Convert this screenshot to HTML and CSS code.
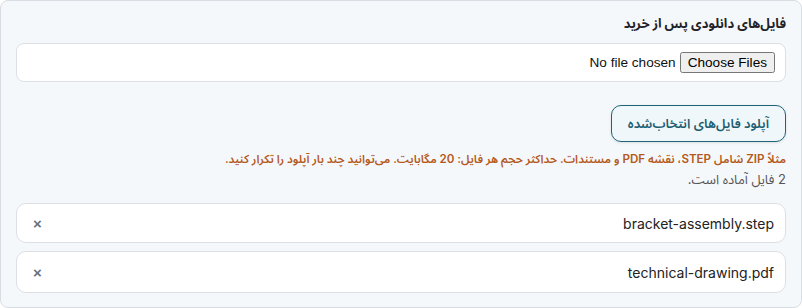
FILE: index.html
```html
<!DOCTYPE html>
<html lang="fa" dir="rtl">
<head>
<meta charset="utf-8">
<link rel="stylesheet" href="styles.css">
</head>
<body>
<section class="panel">
  <h3 class="title">فایل‌های دانلودی پس از خرید</h3>
  <div class="picker"><input type="file" multiple class="file-input"></div>
  <div class="actions"><button class="upload-btn">آپلود فایل‌های انتخاب‌شده</button></div>
  <p class="hint">مثلاً ZIP شامل STEP، نقشه PDF و مستندات. حداکثر حجم هر فایل: 20 مگابایت. می‌توانید چند بار آپلود را تکرار کنید.</p>
  <p class="status">2 فایل آماده است.</p>
  <ul class="files">
    <li class="file"><span class="name">bracket-assembly.step</span><button class="remove">×</button></li>
    <li class="file"><span class="name">technical-drawing.pdf</span><button class="remove">×</button></li>
  </ul>
</section>
</body>
</html>
```
FILE: styles.css
```css
html, body { margin: 0; padding: 0; background: #fff; }
body { font-family: Inter, "Noto Sans Arabic", sans-serif; color: #222; }
.panel {
  box-sizing: border-box;
  width: 802px;
  height: 308px;
  background: #f5f8fb;
  border: 1px solid #d8dde3;
  border-radius: 8px;
  padding: 12px 15px 0 15px;
}
.title { margin: 0; font-size: 13px; font-weight: 700; line-height: 20px; color: #1f2328; }
.picker {
  margin-top: 10px;
  height: 39px;
  box-sizing: border-box;
  background: #fff;
  border: 1px solid #dcdfe4;
  border-radius: 8px;
  display: flex;
  align-items: center;
  padding: 0 10px;
}
.file-input { font-family: "Liberation Sans", Arial, sans-serif; font-size: 13.6px; color: #111; }
.actions { margin-top: 23px; display: flex; }
.upload-btn {
  height: 37px;
  padding: 0 16px;
  background: #f0f7fa;
  border: 1px solid #1e6479;
  border-radius: 10px;
  color: #1d5d70;
  font-family: inherit;
  font-size: 13px;
  font-weight: 600;
  box-shadow: 0 1px 3px rgba(0,0,0,0.1);
}
.hint { margin: 8px 0 0; font-size: 11.6px; font-weight: 600; color: #b45a1c; line-height: 18px; }
.status { margin: 2px 0 0; font-size: 13px; color: #555; line-height: 18px; }
.files { list-style: none; margin: 15px 0 0; padding: 0; display: flex; flex-direction: column; gap: 8px; }
.file {
  box-sizing: border-box;
  height: 40px;
  background: #fff;
  border: 1px solid #dcdfe4;
  border-radius: 10px;
  display: flex;
  align-items: center;
  justify-content: space-between;
  padding: 0 11px 0 16px;
}
.file + .file { height: 42px; }
.name { font-size: 14px; color: #222; }
.remove { border: 0; background: none; color: #6b7280; font-size: 15px; font-weight: 700; padding: 0; cursor: pointer; }
```
